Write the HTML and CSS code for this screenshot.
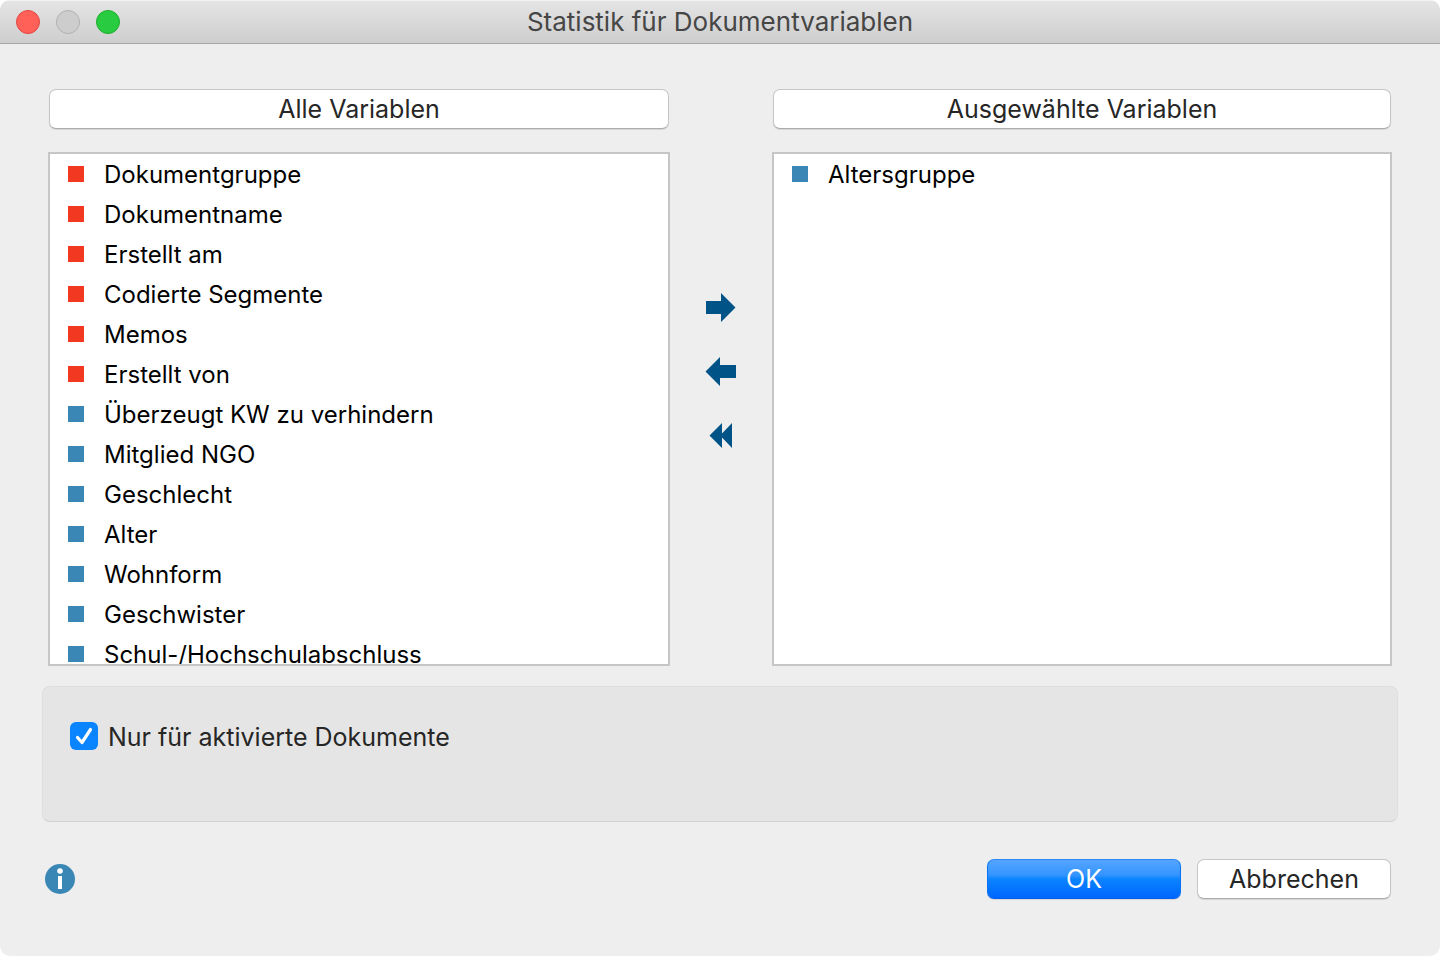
FILE: index.html
```
<!DOCTYPE html>
<html lang="de">
<head>
<meta charset="utf-8">
<title>Statistik für Dokumentvariablen</title>
<link rel="stylesheet" href="styles.css">
</head>
<body>
<div class="window">
  <header class="titlebar">
    <div class="lights">
      <button type="button" class="light close" aria-label="Schließen"></button>
      <button type="button" class="light minimize" aria-label="Minimieren" disabled></button>
      <button type="button" class="light maximize" aria-label="Maximieren"></button>
    </div>
    <h1 class="title">Statistik für Dokumentvariablen</h1>
  </header>

  <main class="content">
    <div class="picker">
      <section class="column">
        <button type="button" class="button heading">Alle Variablen</button>
        <ul class="list">
          <li class="item system">Dokumentgruppe</li>
          <li class="item system">Dokumentname</li>
          <li class="item system">Erstellt am</li>
          <li class="item system">Codierte Segmente</li>
          <li class="item system">Memos</li>
          <li class="item system">Erstellt von</li>
          <li class="item">Überzeugt KW zu verhindern</li>
          <li class="item">Mitglied NGO</li>
          <li class="item">Geschlecht</li>
          <li class="item">Alter</li>
          <li class="item">Wohnform</li>
          <li class="item">Geschwister</li>
          <li class="item">Schul-/Hochschulabschluss</li>
        </ul>
      </section>

      <div class="transfer">
        <button type="button" class="icon-button" aria-label="Hinzufügen">
          <svg width="32" height="32" viewBox="0 0 32 32"><path d="M1 10h15V2l14.500 14.500L16 31v-8H1z"/></svg>
        </button>
        <button type="button" class="icon-button" aria-label="Entfernen">
          <svg width="32" height="32" viewBox="0 0 32 32"><path d="M31 10H15V2L.5 16.500 15 31v-8h16z"/></svg>
        </button>
        <button type="button" class="icon-button" aria-label="Alle entfernen">
          <svg width="32" height="32" viewBox="0 0 32 32"><path d="M4.500 16.500 17 4v10.500L27 4v25L17 18.500V29z"/></svg>
        </button>
      </div>

      <section class="column">
        <button type="button" class="button heading">Ausgewählte Variablen</button>
        <ul class="list">
          <li class="item">Altersgruppe</li>
        </ul>
      </section>
    </div>

    <div class="options">
      <input type="checkbox" class="checkbox" id="active-only" checked>
      <label for="active-only">Nur für aktivierte Dokumente</label>
    </div>

    <footer class="footer">
      <button type="button" class="icon-button" aria-label="Hilfe">
        <svg width="30" height="30" viewBox="0 0 30 30"><circle class="info-disc" cx="15" cy="15" r="15"/><circle class="info-mark" cx="15" cy="7" r="2.800"/><path class="info-mark" d="M13 12h4v13h-4z"/></svg>
      </button>
      <div class="actions">
        <button type="button" class="button primary">OK</button>
        <button type="button" class="button">Abbrechen</button>
      </div>
    </footer>
  </main>
</div>
</body>
</html>
```
FILE: styles.css
```
* { box-sizing: border-box; }

body {
  margin: 0;
  background: #fff;
  font-family: Inter, "Liberation Sans", sans-serif;
  font-size: 25px;
  color: #262626;
}

button, input { font: inherit; color: inherit; margin: 0; }

.window {
  display: flex;
  flex-direction: column;
  height: 100vh;
  min-height: 600px;
  overflow: hidden;
  border-radius: 10px;
  background: #eee;
}

.titlebar {
  display: grid;
  grid-template-columns: 1fr auto 1fr;
  align-items: center;
  height: 44px;
  padding: 0 16px;
  border-top: 1px solid #f4f4f4;
  border-bottom: 1px solid #a8a8a8;
  background: linear-gradient(#e4e4e4, #cecece);
}

.lights { display: flex; gap: 16px; }

.light {
  width: 24px;
  height: 24px;
  padding: 0;
  border: 1px solid;
  border-radius: 50%;
}
.close { background: #ff6159; border-color: #e2463f; }
.minimize { background: #cdcdcd; border-color: #b0b0b0; }
.maximize { background: #29cc41; border-color: #1dad2b; }

.title {
  margin: 0;
  font-size: 26px;
  font-weight: 400;
  line-height: 32px;
  color: #464646;
}

.content {
  display: flex;
  flex: 1;
  flex-direction: column;
  min-height: 0;
  padding: 45px 42px 57px;
}

.picker {
  display: grid;
  flex: 1;
  grid-template-columns: 311fr 102px 310fr;
  grid-template-rows: 100%;
  min-height: 0;
  padding: 0 6px;
}

.column {
  display: flex;
  flex-direction: column;
  gap: 23px;
  min-width: 0;
}

.button {
  width: 194px;
  height: 40px;
  padding: 0;
  border: 1px solid #c6c6c6;
  border-bottom-color: #ababab;
  border-radius: 7px;
  background: #fff;
  box-shadow: 0 1px 1px rgba(0, 0, 0, 0.1);
  line-height: 36px;
}
.heading { width: auto; margin: 0 1px; }
.primary {
  border-color: #2a88f0 #0a74f5 #0060f0;
  background: linear-gradient(#56a5ff, #3394ff 40%, #0a84ff 50%, #0066ff);
  color: #fff;
}

.list {
  flex: 1;
  min-height: 0;
  margin: 0;
  padding: 0 18px;
  overflow-y: auto;
  scrollbar-width: none;
  border: 2px solid #c6c6c6;
  background: #fff;
  color: #000;
  font-size: 24px;
  list-style: none;
}

.item {
  display: flex;
  align-items: center;
  gap: 20px;
  height: 40px;
  white-space: nowrap;
}
.item::before {
  width: 16px;
  height: 16px;
  background: #3a87b5;
  content: "";
}
.system::before { background: #f23820; }

.transfer {
  display: flex;
  flex-direction: column;
  align-items: center;
  justify-content: center;
  gap: 32px;
  padding-top: 140px;
  padding-bottom: 153px;
}

.icon-button {
  display: flex;
  padding: 0;
  border: 0;
  background: none;
  fill: #005387;
}
.info-disc { fill: #3a87b5; }
.info-mark { fill: #fff; }

.options {
  display: flex;
  align-items: flex-start;
  gap: 10px;
  height: 136px;
  margin-top: 20px;
  padding: 35px 27px;
  border: 1px solid #dedede;
  border-bottom-color: #d2d2d2;
  border-radius: 8px;
  background: #e5e5e5;
  line-height: 30px;
}

.checkbox {
  width: 28px;
  height: 28px;
  appearance: none;
  border-radius: 6px;
  background: #fff;
}
.checkbox:checked {
  background: #0a84ff url("data:image/svg+xml,%3Csvg xmlns='http://www.w3.org/2000/svg' viewBox='0 0 28 28'%3E%3Cpath d='M7.500 15.500l4.500 5L20.500 7.500' fill='none' stroke='%23fff' stroke-width='3.200' stroke-linecap='round' stroke-linejoin='round'/%3E%3C/svg%3E");
}

.footer {
  display: flex;
  align-items: center;
  justify-content: space-between;
  margin-top: 37px;
  padding: 0 7px 0 3px;
}

.actions { display: flex; gap: 16px; }
```
